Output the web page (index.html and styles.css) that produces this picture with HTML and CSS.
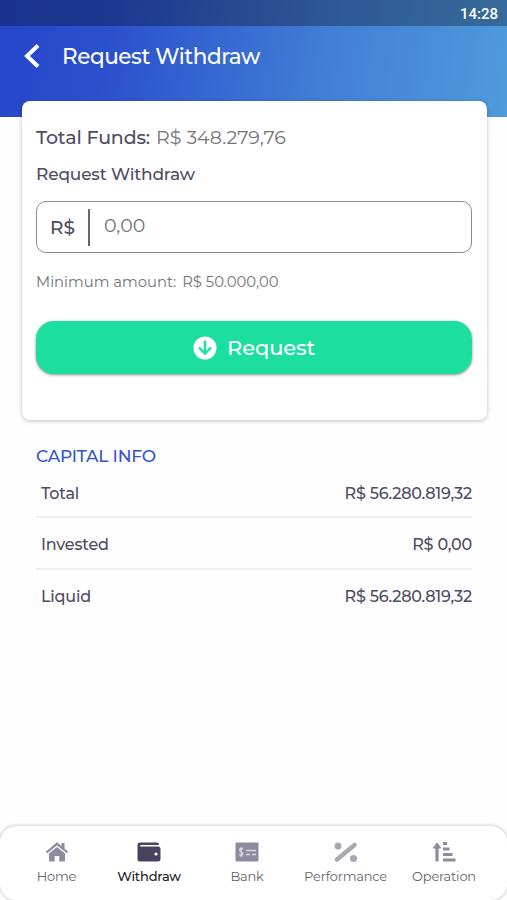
FILE: index.html
```html
<!DOCTYPE html>
<html lang="en">
  <head>
    <meta charset="UTF-8" />
    <meta name="viewport" content="width=device-width, initial-scale=1.0" />
    <title>Request Withdraw</title>
    <link rel="stylesheet" href="styles.css">
  </head>
  <body>
    <header class="header">
      <div class="status-bar"><span>14:28</span></div>
      <div class="title-bar">
        <svg class="back-icon" width="18" height="26" viewBox="0 0 18 26">
          <path d="M16 2.500L5 13L16 23.500" fill="none" stroke="#fff" stroke-width="4" />
        </svg>
        <h1>Request Withdraw</h1>
      </div>
    </header>

    <main>
      <section class="card">
        <p class="funds"><span class="funds-label">Total Funds:</span><span class="funds-value">R$ 348.279,76</span></p>
        <h2>Request Withdraw</h2>
        <div class="amount">
          <span class="currency">R$</span>
          <span class="amount-value">0,00</span>
        </div>
        <p class="minimum"><span>Minimum amount:</span><span>R$ 50.000,00</span></p>
        <button type="button" class="request-btn">
          <svg width="24" height="24" viewBox="0 0 24 24">
            <circle cx="12" cy="12" r="11.5" fill="#fff" />
            <path d="M12 4.500V18M6 11.500L12 17.500L18 11.500" fill="none" stroke="#1cde9f" stroke-width="2.4" />
          </svg>
          <span>Request</span>
        </button>
      </section>

      <section class="capital">
        <h3>CAPITAL INFO</h3>
        <div class="row"><span>Total</span><span>R$ 56.280.819,32</span></div>
        <div class="row"><span>Invested</span><span>R$ 0,00</span></div>
        <div class="row"><span>Liquid</span><span>R$ 56.280.819,32</span></div>
      </section>
    </main>

    <nav class="tabs">
      <a class="tab first">
        <svg width="24" height="20" viewBox="0 0 24 20">
          <path d="M1.500 10.500L12 1.800L22.500 10.500" fill="none" stroke="#8e8b9f" stroke-width="2.200" />
          <path d="M16.500 1H19.500V7L16.500 4.500Z" fill="#8e8b9f" />
          <path d="M12 5L20 11.500V19.500H14.300V14H9.700V19.500H4V11.500Z" fill="#8e8b9f" />
        </svg>
        <span>Home</span>
      </a>
      <a class="tab active">
        <svg width="24" height="20" viewBox="0 0 24 20">
          <path d="M3 .5H20Q22 .5 22 2.500V3H4Q3 3 3 3.700T4 4.500H21Q23.500 4.500 23.500 7V17Q23.500 19.500 21 19.500H3Q.5 19.500 .5 17V3Q.5 .5 3 .5Z" fill="#4a435f" />
          <circle cx="19" cy="12" r="1.600" fill="#fff" />
        </svg>
        <span>Withdraw</span>
      </a>
      <a class="tab">
        <svg width="24" height="20" viewBox="0 0 24 20">
          <rect x=".5" y=".5" width="23" height="19" rx="1" fill="#8e8b9f" />
          <path d="M8 7.500Q7.500 6.500 6.300 6.500Q4.500 6.500 4.500 8Q4.500 9.300 6.300 9.800Q8 10.300 8 11.800Q8 13.300 6.300 13.300Q5 13.300 4.300 12.300M6.300 5V15M11 8.500H21M11 12.500H15M17 12.500H21" fill="none" stroke="#d9d8e0" stroke-width="1.300" />
        </svg>
        <span>Bank</span>
      </a>
      <a class="tab wide">
        <svg width="24" height="20" viewBox="0 0 24 20">
          <path d="M3 17.500L20.500 3" stroke="#a9a8b0" stroke-width="4.500" stroke-linecap="round" />
          <circle cx="4" cy="4" r="3.500" fill="#a9a8b0" />
          <circle cx="19.500" cy="16.500" r="3.500" fill="#a9a8b0" />
        </svg>
        <span>Performance</span>
      </a>
      <a class="tab">
        <svg width="24" height="20" viewBox="0 0 24 20">
          <path d="M5 19.500V4" stroke="#8e8b9f" stroke-width="3.200" />
          <path d="M1.300 6L5 1L8.700 6Z" fill="#8e8b9f" stroke="#8e8b9f" stroke-linejoin="round" />
          <path d="M11 1.500H15M11 7H17.500M11 12.500H20.500M11 18H23.500" stroke="#8e8b9f" stroke-width="2.800" />
        </svg>
        <span>Operation</span>
      </a>
    </nav>
  </body>
</html>
```
FILE: styles.css
```css
* {
  margin: 0;
  padding: 0;
  box-sizing: border-box;
  font-family: "Montserrat", "Inter", sans-serif;
}

body {
  display: flex;
  flex-direction: column;
  height: 100vh;
  background: #fefefe;
  color: #4f4b63;
  overflow: hidden;
}

span {
  white-space: nowrap;
}

.header {
  height: 117px;
  flex-shrink: 0;
  background: linear-gradient(100deg, #2547cb 0%, #2b50cd 22%, #4280d6 65%, #4f9bdb 100%);
}

.status-bar {
  height: 26px;
  padding-right: 9px;
  background: rgba(0, 0, 0, 0.3);
  color: #fff;
  text-align: right;
  line-height: 28px;
}

.status-bar span {
  font-family: "Roboto", sans-serif;
  font-size: 15px;
  font-weight: 500;
}

.title-bar {
  display: flex;
  align-items: center;
  height: 60px;
  padding-left: 22px;
  gap: 22px;
  color: #fff;
}

.title-bar h1 {
  font-size: 21.5px;
  font-weight: 500;
  letter-spacing: -0.42px;
}

.card {
  position: relative;
  height: 319px;
  margin: -16px 20px 0 22px;
  padding: 25px 15px 0 14px;
  background: #fff;
  border-radius: 8px;
  box-shadow: 0 1px 4px rgba(0, 0, 0, 0.25);
}

.funds {
  display: flex;
  gap: 6px;
  font-size: 19px;
  line-height: 24px;
}

.funds-label {
  font-weight: 500;
  letter-spacing: -0.15px;
}

.funds-value,
.amount-value,
.minimum {
  color: #74727b;
}

.card h2 {
  margin-top: 13px;
  font-size: 17px;
  font-weight: 500;
  letter-spacing: -0.18px;
  line-height: 22px;
}

.amount {
  display: flex;
  align-items: center;
  height: 52px;
  margin-top: 16px;
  padding-left: 13px;
  border: 1px solid #8c8c8c;
  border-radius: 10px;
}

.currency {
  width: 40px;
  font-size: 18.5px;
  font-weight: 500;
  line-height: 37px;
  border-right: 2px solid #66646e;
}

.amount-value {
  margin-left: 14px;
  font-size: 19px;
  line-height: 24px;
  padding-bottom: 2px;
}

.minimum {
  display: flex;
  gap: 6px;
  margin-top: 19px;
  font-size: 14.8px;
  line-height: 20px;
}

.request-btn {
  display: flex;
  justify-content: center;
  align-items: center;
  gap: 10px;
  width: 100%;
  height: 53px;
  margin-top: 29px;
  background: #1cde9f;
  color: #fff;
  font-size: 21px;
  font-weight: 500;
  letter-spacing: -0.1px;
  border: none;
  border-radius: 18px;
  box-shadow: 0 1px 3px rgba(0, 0, 0, 0.45);
  cursor: pointer;
}

.capital {
  padding: 25px 35px 0 36px;
}

.capital h3 {
  color: #3353cb;
  font-size: 17px;
  font-weight: 500;
  letter-spacing: -0.2px;
  line-height: 22px;
}

.row {
  display: flex;
  justify-content: space-between;
  align-items: center;
  height: 52px;
  padding: 3px 0 0 5px;
  font-size: 16px;
  font-weight: 500;
  letter-spacing: -0.19px;
  border-bottom: 2px solid #efefef;
}

.capital h3 + .row {
  height: 51px;
  padding-top: 4px;
}

.row:last-child {
  height: 50px;
  border-bottom: none;
}

.tabs {
  display: flex;
  height: 74px;
  margin-top: auto;
  padding-left: 13px;
  background: #fff;
  border-radius: 16px;
  box-shadow: 0 0 3px 1px rgba(0, 0, 0, 0.18);
}

.tab {
  display: flex;
  flex-direction: column;
  align-items: center;
  width: 98px;
  padding-top: 16px;
  color: #66656b;
  font-size: 13px;
  letter-spacing: -0.2px;
}

.first {
  width: 87px;
}

.wide {
  width: 99px;
}

.tab span {
  margin-top: 5px;
  line-height: 18px;
}

.active {
  color: #222;
  font-weight: 500;
}
```
